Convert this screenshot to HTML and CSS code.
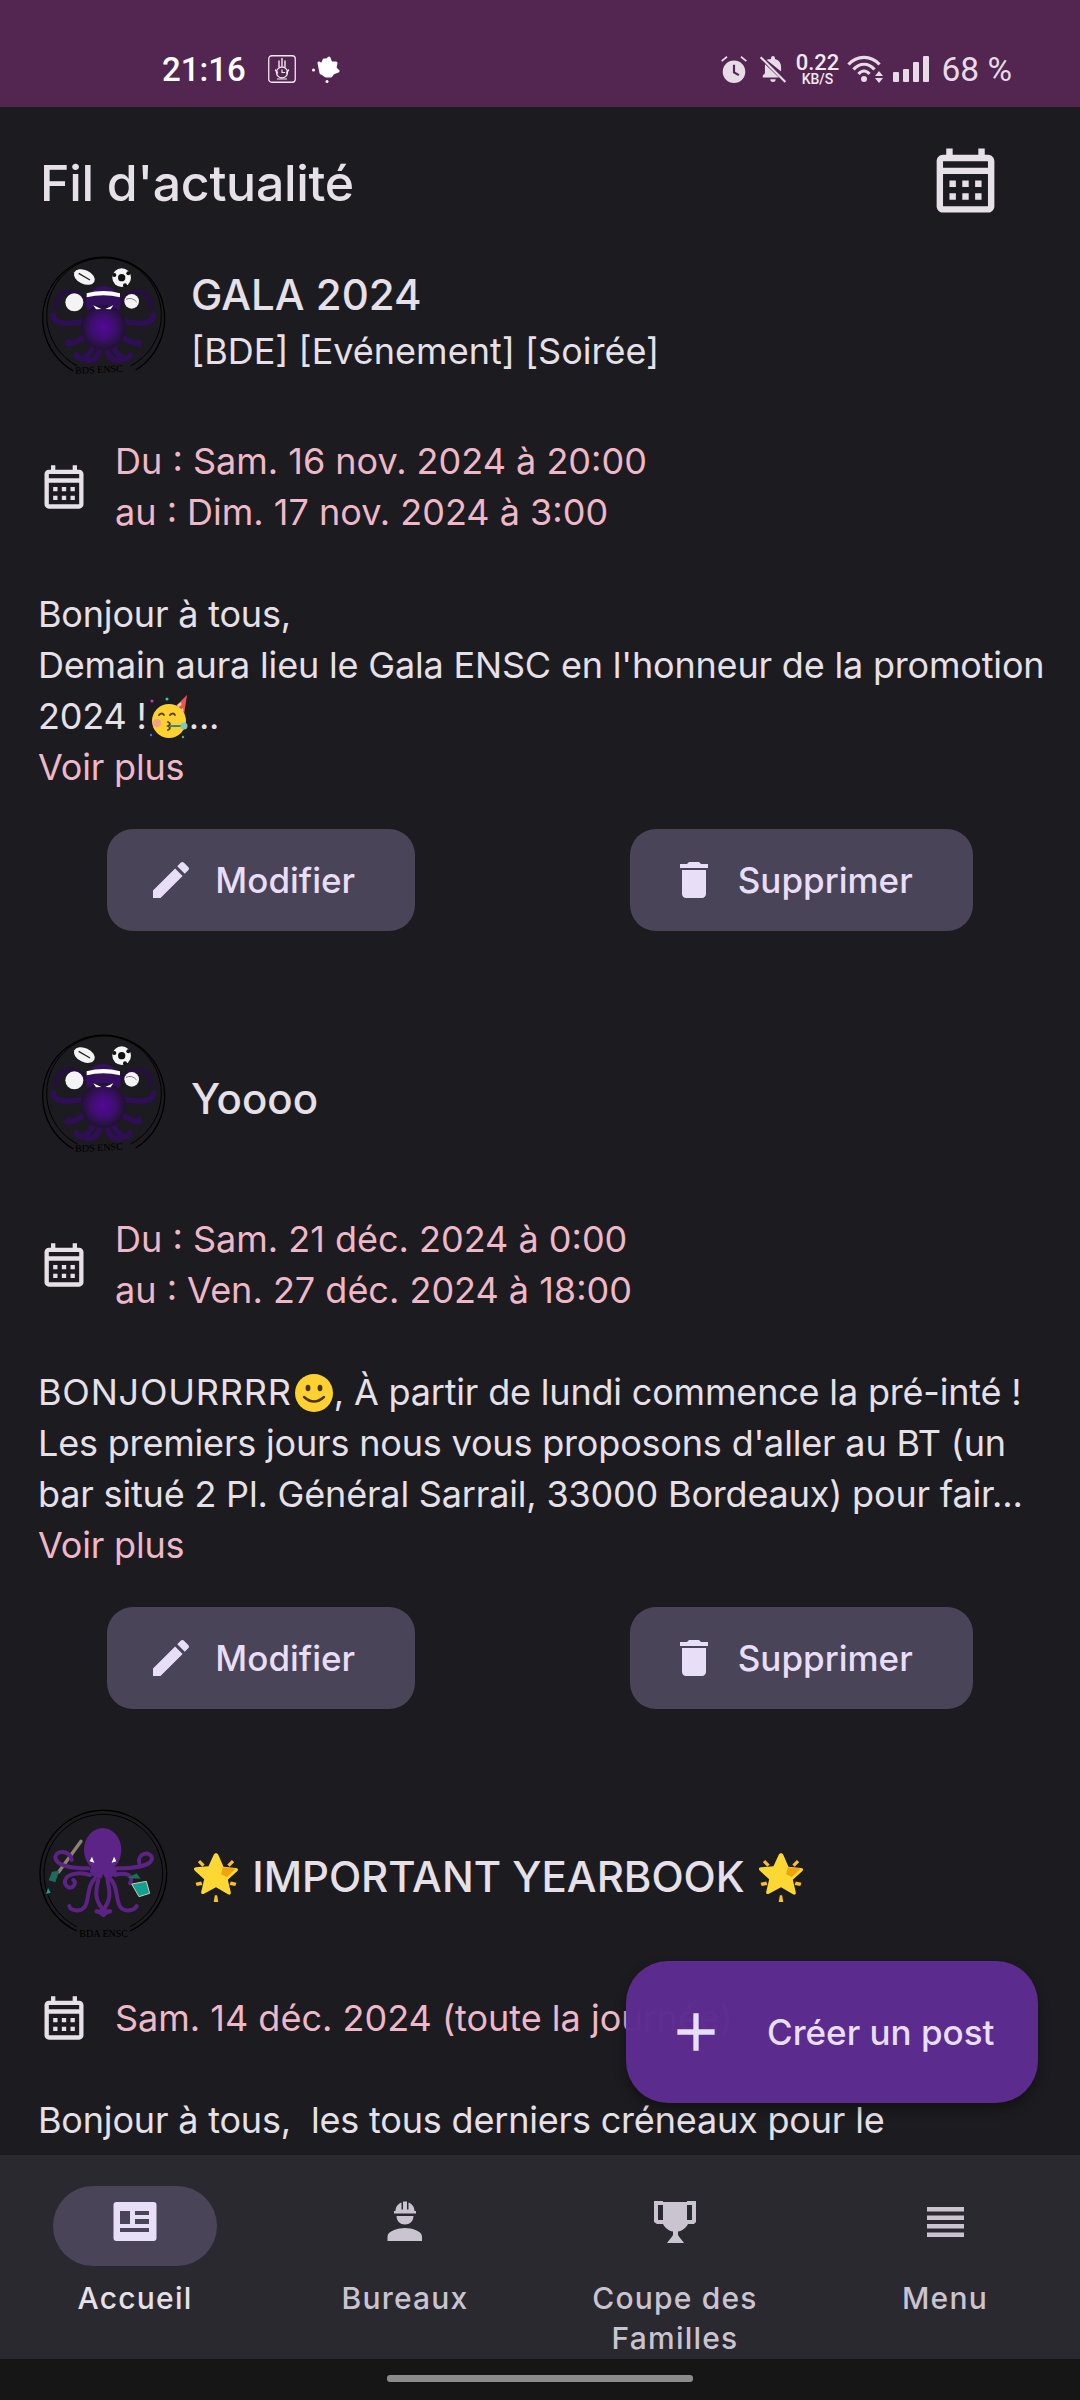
FILE: index.html
```html
<!DOCTYPE html>
<html lang="fr">
<head>
<meta charset="utf-8">
<title>Fil d'actualité</title>
<link rel="stylesheet" href="styles.css">
</head>
<body>
<svg class="defs" aria-hidden="true">
  <defs>
    <radialGradient id="bds" cx="50%" cy="50%" r="50%"><stop offset="0" stop-color="#54089a"/><stop offset=".55" stop-color="#3c0f6c"/><stop offset="1" stop-color="#1f1230"/></radialGradient>
    <symbol id="cal" viewBox="0 0 24 24"><path fill="currentColor" d="M19 4h-1V2h-2v2H8V2H6v2H5c-1.11 0-1.99.9-1.99 2L3 20c0 1.1.89 2 2 2h14c1.1 0 2-.9 2-2V6c0-1.1-.9-2-2-2zm0 16H5V10h14v10zm0-12H5V6h14v2zM9 14H7v-2h2v2zm4 0h-2v-2h2v2zm4 0h-2v-2h2v2zm-8 4H7v-2h2v2zm4 0h-2v-2h2v2zm4 0h-2v-2h2v2z"/></symbol>
    <symbol id="edit" viewBox="0 0 24 24"><path fill="currentColor" d="M3 17.25V21h3.75L17.81 9.94l-3.75-3.75L3 17.25zM20.71 7.04c.39-.39.39-1.02 0-1.41l-2.34-2.34c-.39-.39-1.02-.39-1.41 0l-1.83 1.83 3.75 3.75 1.83-1.83z"/></symbol>
    <symbol id="trash" viewBox="0 0 24 24"><path fill="currentColor" d="M6 19c0 1.1.9 2 2 2h8c1.1 0 2-.9 2-2V7H6v12zM19 4h-3.5l-1-1h-5l-1 1H5v2h14V4z"/></symbol>
    <symbol id="star" viewBox="0 0 40 44">
      <path fill="#fbc02d" d="M6 7l4 4-2 2-4-4zM34 7l2 2-4 4-2-2zM2 27l5-1 1 3-5 1zM38 27l-5-1-1 3 5 1zM19 38h2l1 6h-4z"/>
      <path fill="#fdd835" d="M20 1c1 0 1.600.6 2 1.500l4.600 10.500 11 1c2 .2 2.400 1.700 1 3l-8.200 7.500 2.600 11c.4 1.700-1 2.500-2.400 1.700L20 31l-10.600 5.700c-1.400.8-2.800 0-2.400-1.700l2.600-11L1.400 16.500c-1.400-1.300-1-2.800 1-3l11-1L18 2.500C18.400 1.600 19 1 20 1z"/>
      <path fill="#f0a30a" d="M26 13.500l11.500 1-8 7.500-5-2.500z"/>
    </symbol>
    <symbol id="party" viewBox="0 0 40 44">
      <path fill="#e8574f" d="M24 14L38 0l-3 20z"/>
      <path fill="#f5c6a0" d="M28 10l4-3 .6 3-3 2zM31 15l3-2 .5 3-2 2z"/>
      <circle cx="20" cy="26" r="17" fill="#fdd132"/>
      <circle cx="8" cy="28" r="4" fill="#f2a08a"/>
      <path fill="none" stroke="#5a3a10" stroke-width="1.800" stroke-linecap="round" d="M10 20q3-3 5 0M21 20q3-3 5 0M19 27q4 2 0 4q4 2 0 4"/>
      <path fill="none" stroke="#2f8f83" stroke-width="2" d="M21 31h12"/>
      <circle cx="35" cy="31" r="3.500" fill="#7fc7b8"/>
      <circle cx="3" cy="6" r="1.500" fill="#e02ec0"/><circle cx="18" cy="4" r="1.500" fill="#2fc3c9"/><circle cx="2" cy="40" r="1.200" fill="#3a78e0"/><circle cx="34" cy="42" r="1.200" fill="#58b368"/>
    </symbol>
    <symbol id="smile" viewBox="0 0 40 40">
      <circle cx="20" cy="20" r="19" fill="#fdd132"/>
      <ellipse cx="14" cy="15" rx="2.400" ry="3.200" fill="#4a3410"/><ellipse cx="26" cy="15" rx="2.400" ry="3.200" fill="#4a3410"/>
      <path fill="none" stroke="#4a3410" stroke-width="2.400" stroke-linecap="round" d="M10 24q10 9 20 0"/>
    </symbol>
    <symbol id="bdslogo" viewBox="60 45 390 390">
      <path fill="none" stroke="#000" stroke-width="4" d="M160 393A183 183 0 1 1 347 390"/>
      <path fill="none" stroke="#000" stroke-width="3" d="M172 378A172 172 0 1 1 332 378"/>
      <g fill="none" stroke="#24103c" stroke-width="16" stroke-linecap="round">
        <path d="M205 190C150 130 110 160 108 200"/><path d="M295 190C350 130 395 160 392 200"/>
      </g>
      <g fill="none" stroke="#2e0f56" stroke-width="17" stroke-linecap="round">
        <path d="M215 240C160 250 100 260 100 225"/><path d="M285 240C340 250 400 260 400 225"/>
        <path d="M210 280C170 310 130 320 145 305"/><path d="M290 280C330 310 370 320 355 305"/>
        <path d="M225 300C215 350 180 370 170 345"/><path d="M275 300C285 350 320 370 330 345"/>
        <path d="M240 310C240 350 225 365 200 360"/><path d="M260 310C260 350 275 365 300 360"/>
      </g>
      <ellipse cx="250" cy="190" rx="52" ry="52" fill="#35105f"/>
      <ellipse cx="250" cy="262" rx="68" ry="68" fill="url(#bds)"/>
      <path fill="#fff" d="M200 160q50 -14 100 0v12q-50 -12 -100 0z"/>
      <path fill="#fff" d="M220 196l24 11-16 1zM280 196l-24 11 16 1z"/>
      <ellipse cx="193" cy="111" rx="33" ry="21" fill="#f4f4f4" transform="rotate(25 193 111)"/>
      <path d="M176 100l34 20" stroke="#222" stroke-width="4"/>
      <circle cx="305" cy="113" r="28" fill="#f4f4f4"/><circle cx="305" cy="113" r="11" fill="#111"/><circle cx="283" cy="105" r="6" fill="#111"/><circle cx="325" cy="100" r="6" fill="#111"/><circle cx="315" cy="136" r="6" fill="#111"/>
      <circle cx="163" cy="187" r="27" fill="#f4f4f4"/>
      <circle cx="335" cy="184" r="22" fill="#f4f4f4"/>
      <path d="M318 178q18 -8 32 8" fill="none" stroke="#444" stroke-width="2"/>
      <text class="logo-text" x="166" y="398" transform="rotate(-3 250 398)">BDS ENSC</text>
    </symbol>
    <symbol id="bdalogo" viewBox="60 33 390 390">
      <path fill="none" stroke="#000" stroke-width="4" d="M170 393A190 190 0 1 1 330 393"/>
      <path fill="none" stroke="#000" stroke-width="3" d="M170 380A178 178 0 1 1 330 380"/>
      <path stroke="#8d8374" stroke-width="10" stroke-linecap="round" d="M183 124L116 216"/>
      <path fill="#1c6b5d" d="M118 212l-12 35-20 -6 10 -26z"/>
      <path fill="#12a090" d="M84 264l8 14-14 4z"/>
      <g fill="none" stroke="#5d2384" stroke-width="12" stroke-linecap="round">
        <path d="M205 205C165 205 105 200 106 170C110 150 150 150 155 180"/>
        <path d="M290 205C330 205 395 200 396 175C392 150 350 160 358 190"/>
        <path d="M210 225C180 215 130 220 135 250C150 280 175 250 160 240"/>
        <path d="M285 225C315 215 345 225 330 250"/>
        <path d="M225 235C200 260 210 290 195 320C180 340 150 330 148 318"/>
        <path d="M270 235C295 260 285 290 300 320C315 340 345 330 350 318"/>
        <path d="M235 240C225 280 225 300 250 330C225 345 220 320 250 345"/>
        <path d="M262 240C272 280 272 300 250 330C275 345 280 320 250 345"/>
      </g>
      <ellipse cx="248" cy="150" rx="56" ry="66" fill="#5c2486"/>
      <ellipse cx="250" cy="212" rx="40" ry="24" fill="#5c2486"/>
      <path fill="#1c1b1f" d="M250 222q-14 24 0 48q14 -24 0 -48z"/>
      <path fill="#fff" d="M216 170l7 18-14 -4zM282 170l-7 18 14 -4z"/>
      <path fill="#14a090" stroke="#cfcbb0" stroke-width="3" d="M335 252l44 -8 10 36-32 10z"/>
      <path fill="#1c6b5d" d="M322 234l28 -14 12 16z"/>
      <text class="logo-text" x="178" y="412">BDA ENSC</text>
    </symbol>
  </defs>
</svg>

<div class="phone">
  <div class="status">
    <div class="status-left">
      <span class="time">21:16</span>
      <svg class="st-hand" viewBox="0 0 28 28"><rect x=".75" y=".75" width="26.500" height="26.500" rx="3" fill="none" stroke="#f2e8f0" stroke-width="1.300"/><path fill="none" stroke="#f2e8f0" stroke-width="1.400" stroke-linecap="round" d="M11 12V6M14 11V3.500M17 12V6M7.500 15l2 3M20.500 15l-2 3"/><circle cx="14" cy="17.500" r="5.500" fill="none" stroke="#f2e8f0" stroke-width="1.300"/><path fill="none" stroke="#f2e8f0" stroke-width="1.200" d="M14 14.500v3h3M9 24h10"/></svg>
      <svg class="st-leaf" viewBox="0 0 28 28"><path fill="#fff" stroke="#fff" stroke-width="3" stroke-linejoin="round" d="M7 8l3 2 2-5 3 0 2-2 2 5 5 0-1 5 3 3-5 2-2 3-5 0-3-2-2-1-1-5z"/><circle cx="1.500" cy="15" r="1.500" fill="#fff"/><circle cx="15" cy="26.500" r="1.500" fill="#fff"/></svg>
    </div>
    <div class="status-right">
      <svg class="st-alarm" viewBox="0 0 26 26"><path fill="#e6dbe6" fill-rule="evenodd" d="M13 5a10.500 10.500 0 1 0 0 21 10.500 10.500 0 0 0 0-21zM12 9h2v6.500l4 2.400-1 1.700-5-3zM1 5l5-4 1 1.300-5 4zM25 5l-5-4-1 1.300 5 4z"/></svg>
      <svg class="st-bell" viewBox="0 0 26 26"><path fill="#e6dbe6" d="M13 1c1 0 1.800.8 1.800 1.800v.9c3.400.8 5.700 3.800 5.700 7.300v4.300L7.200 4.700C8 4 9.600 3.900 11.200 3.700v-.9C11.200 1.800 12 1 13 1zM5.600 8.500L18.500 21H3.500v-2l2-2v-6c0-.9 0-1.700.1-2.500zM10.500 22.500h5a2.500 2.500 0 0 1-5 0z"/><path stroke="#e6dbe6" stroke-width="2" d="M1.500 2l23 23"/></svg>
      <span class="speed"><span class="speed-num">0.22</span><span class="speed-unit">KB/S</span></span>
      <svg class="st-wifi" viewBox="0 0 37 30"><g fill="none" stroke="#e6dbe6" stroke-width="3.200"><path d="M1.500 10.500C10 1 24 1 32.500 10.500"/><path d="M6.500 15.500C12.500 8.500 21.500 8.500 27.500 15.500"/><path d="M11.500 20c3.500-4 7.500-4 11 0"/></g><circle cx="17" cy="25" r="3" fill="#e6dbe6"/><path fill="#e6dbe6" d="M32 17l4 5h-8zM28 24h8l-4 5z"/></svg>
      <svg class="st-signal" viewBox="0 0 36 26"><g fill="#e6dbe6"><rect x="0" y="16" width="6" height="10" rx="1"/><rect x="10" y="13" width="6" height="13" rx="1"/><rect x="20" y="6" width="6" height="20" rx="1"/><rect x="30" y="0" width="6" height="26" rx="1"/></g></svg>
      <span class="batt">68 %</span>
    </div>
  </div>

  <main class="feed">
    <header class="feed-head">
      <h1 class="feed-title">Fil d'actualité</h1>
      <svg class="head-cal"><use href="#cal"/></svg>
    </header>

    <article class="post">
      <div class="post-head">
        <svg class="avatar"><use href="#bdslogo"/></svg>
        <div class="titles-tagged">
          <h2 class="post-title">GALA 2024</h2>
          <p class="post-tags">[BDE] [Evénement] [Soirée]</p>
        </div>
      </div>
      <div class="post-date">
        <svg class="date-ico"><use href="#cal"/></svg>
        <p class="date-text">Du : Sam. 16 nov. 2024 à 20:00<br>au : Dim. 17 nov. 2024 à 3:00</p>
      </div>
      <p class="post-body">Bonjour à tous,<br>Demain aura lieu le Gala ENSC en l'honneur de la promotion<br>2024 !<svg class="emoji-party"><use href="#party"/></svg>...<br><span class="more">Voir plus</span></p>
      <div class="actions">
        <button class="btn"><svg class="btn-ico"><use href="#edit"/></svg>Modifier</button>
        <button class="btn"><svg class="btn-ico"><use href="#trash"/></svg>Supprimer</button>
      </div>
    </article>

    <article class="post">
      <div class="post-head">
        <svg class="avatar"><use href="#bdslogo"/></svg>
        <div>
          <h2 class="post-title">Yoooo</h2>
        </div>
      </div>
      <div class="post-date">
        <svg class="date-ico"><use href="#cal"/></svg>
        <p class="date-text">Du : Sam. 21 déc. 2024 à 0:00<br>au : Ven. 27 déc. 2024 à 18:00</p>
      </div>
      <p class="post-body"><span class="caps">BONJOURRRR</span><svg class="emoji-smile"><use href="#smile"/></svg>, À partir de lundi commence la pré-inté !<br>Les premiers jours nous vous proposons d'aller au BT (un<br>bar situé 2 Pl. Général Sarrail, 33000 Bordeaux) pour fair...<br><span class="more">Voir plus</span></p>
      <div class="actions">
        <button class="btn"><svg class="btn-ico"><use href="#edit"/></svg>Modifier</button>
        <button class="btn"><svg class="btn-ico"><use href="#trash"/></svg>Supprimer</button>
      </div>
    </article>

    <article class="post">
      <div class="post-head">
        <svg class="avatar"><use href="#bdalogo"/></svg>
        <div>
          <h2 class="post-title"><svg class="emoji-star"><use href="#star"/></svg> IMPORTANT YEARBOOK <svg class="emoji-star"><use href="#star"/></svg></h2>
        </div>
      </div>
      <div class="post-date">
        <svg class="date-ico"><use href="#cal"/></svg>
        <p class="date-text">Sam. 14 déc. 2024 (toute la journée)</p>
      </div>
      <p class="post-body">Bonjour à tous, &nbsp;les tous derniers créneaux pour le</p>
    </article>
  </main>

  <button class="fab">
    <svg class="fab-ico" viewBox="0 0 24 24"><path fill="currentColor" d="M19 13h-6v6h-2v-6H5v-2h6V5h2v6h6v2z"/></svg>
    Créer un post
  </button>

  <nav class="nav">
    <div class="nav-item active">
      <div class="nav-pill">
        <svg class="nav-ico" viewBox="0 0 60 60"><path fill="#e8def8" fill-rule="evenodd" d="M11.500 10h37a3 3 0 0 1 3 3v33a3 3 0 0 1-3 3h-37a3 3 0 0 1-3-3V13a3 3 0 0 1 3-3zM15 19v13h10V19zM30 19v4h14v-4zM30 27v5h14v-5zM15 36v4h29v-4z"/></svg>
      </div>
      <span class="nav-label">Accueil</span>
    </div>
    <div class="nav-item">
      <div class="nav-pill">
        <svg class="nav-ico" viewBox="0 0 60 60"><path fill="#cac4d0" d="M28 9.500h4v8h1.500v-7c3.500 1.200 6 4.500 6 8.500h1.500v2.500H19V19h1.500c0-4 2.500-7.300 6-8.500v7H28zM21.500 24h17c0 5-3.800 8.500-8.500 8.500s-8.500-3.500-8.500-8.500zM30 36c7 0 17 3 17 8.500V49H12.500v-4.500C12.500 39 23 36 30 36z"/></svg>
      </div>
      <span class="nav-label">Bureaux</span>
    </div>
    <div class="nav-item">
      <div class="nav-pill">
        <svg class="nav-ico" viewBox="0 0 60 60"><path fill="#cac4d0" fill-rule="evenodd" d="M9 9h9v1h24V9h9v21l-2 2h-6c-2 4-6 7-10 7.500V43c1 2 3 4 6 8H22c3-4 5-6 6-8v-3.500c-4-.5-8-3.500-10-7.500h-6l-3-2zM13 13v15h5V13zM42 13v15h5V13z"/></svg>
      </div>
      <span class="nav-label">Coupe des<br>Familles</span>
    </div>
    <div class="nav-item">
      <div class="nav-pill">
        <svg class="nav-ico" viewBox="0 0 60 60"><path fill="#cac4d0" d="M12 15h37v4.500H12zM12 23.500h37V28H12zM12 32h37v4.500H12zM12 40.500h37V45H12z"/></svg>
      </div>
      <span class="nav-label">Menu</span>
    </div>
  </nav>
  <div class="gesture"><div class="gesture-pill"></div></div>
</div>
</body>
</html>
```

FILE: styles.css
```css
* { box-sizing: border-box; }
html, body { margin: 0; padding: 0; }
body { background: #1c1b1f; font-family: Inter, "Noto Sans", sans-serif; color: #e6e0e9; }
.defs { display: block; width: 0; height: 0; }
symbol { overflow: visible; }
.logo-text { font-family: "Liberation Serif", serif; font-size: 30px; fill: #000; }

.phone { position: relative; width: 1080px; height: 2400px; display: flex; flex-direction: column; overflow: hidden; }

.status { height: 107px; flex: none; background: #522650; display: flex; justify-content: space-between; align-items: center; padding: 31px 68px 0 162px; }
.status-left, .status-right { display: flex; align-items: center; }
.time { font-family: Roboto, sans-serif; font-size: 33px; font-weight: 500; color: #fff; width: 106px; }
.st-hand { width: 28px; height: 28px; }
.st-leaf { width: 28px; height: 28px; margin-left: 16px; }
.st-alarm { width: 28px; height: 28px; }
.st-bell { width: 28px; height: 28px; margin-left: 11px; }
.speed { display: flex; flex-direction: column; align-items: center; margin-left: 10px; width: 40px; color: #f2e8f0; font-family: Roboto, sans-serif; font-weight: 500; }
.speed-num { font-size: 22px; line-height: 20px; }
.speed-unit { font-size: 14px; line-height: 13px; }
.st-wifi { width: 37px; height: 30px; margin-left: 10px; }
.st-signal { width: 36px; height: 26px; margin-left: 9px; }
.batt { font-family: Roboto, sans-serif; font-size: 33.5px; color: #e6dbe6; margin-left: 12px; white-space: nowrap; }

.feed { flex: 1; min-height: 0; overflow: hidden; }
.feed-head { height: 148px; display: flex; justify-content: space-between; align-items: center; padding: 0 76px 0 40px; }
.feed-title { margin: 0; font-size: 50px; font-weight: 500; line-height: 56px; letter-spacing: -.3px; position: relative; top: 2px; }
.head-cal { width: 77px; height: 77px; color: #e6e0e9; position: relative; top: -1px; }

.post { margin-bottom: 102px; }
.post-head { display: flex; align-items: center; gap: 21px; padding-left: 40px; min-height: 130px; }
.avatar { width: 130px; height: 130px; overflow: visible; flex: none; }
.titles-tagged { padding-top: 6px; }
.post-title { margin: 0; font-size: 42px; font-weight: 500; line-height: 57px; white-space: nowrap; }
.post-tags { margin: 0; font-size: 36px; line-height: 57px; white-space: nowrap; }

.post-date { margin-top: 51px; display: flex; align-items: center; gap: 25px; padding-left: 38px; }
.date-ico { width: 52px; height: 52px; flex: none; color: #e6e0e9; }
.date-text { margin: 0; font-size: 36px; line-height: 51px; color: #efb8c8; white-space: nowrap; }

.post-body { margin: 51px 0 0; padding-left: 38px; font-size: 36px; line-height: 51px; white-space: nowrap; letter-spacing: -.18px; }
.caps { letter-spacing: .8px; }
.more { color: #efb8c8; }
.emoji-party { width: 40px; height: 44px; vertical-align: -10px; margin-left: 2px; }
.emoji-smile { width: 40px; height: 40px; vertical-align: -8px; margin-left: 2px; }
.emoji-star { width: 50px; height: 50px; vertical-align: -10px; }

.actions { margin-top: 36px; display: flex; justify-content: space-around; }
.btn { height: 102px; display: flex; align-items: center; gap: 20px; padding: 0 60px 0 40px; border: 0; border-radius: 26px; background: #4a4458; color: #e8def8; font-family: Inter, sans-serif; font-size: 35px; font-weight: 500; }
.btn-ico { width: 48px; height: 48px; flex: none; }

.fab { position: absolute; left: 626px; top: 1961px; width: 412px; height: 142px; display: flex; align-items: center; padding: 0 0 0 38px; border: 0; border-radius: 42px; background: rgba(92, 44, 143, .985); box-shadow: 0 6px 12px rgba(0, 0, 0, .35); color: #e8def8; font-family: Inter, sans-serif; font-size: 35px; font-weight: 500; gap: 39px; }
.fab-ico { width: 64px; height: 64px; flex: none; }

.nav { flex: none; height: 204px; background: #2b2930; display: grid; grid-template-columns: repeat(4, 270px); padding-top: 31px; }
.nav-item { display: flex; flex-direction: column; align-items: center; }
.nav-pill { width: 164px; height: 80px; border-radius: 40px; display: flex; align-items: center; justify-content: center; padding-bottom: 8px; }
.active .nav-pill { background: #4a4458; }
.nav-ico { width: 60px; height: 60px; }
.nav-label { margin-top: 12px; font-size: 30px; font-weight: 500; line-height: 40px; letter-spacing: 1.2px; color: #cac4d0; text-align: center; white-space: nowrap; }
.active .nav-label { color: #e6e0e9; }

.gesture { flex: none; height: 41px; background: #161616; display: flex; justify-content: center; padding-top: 16px; }
.gesture-pill { width: 306px; height: 7px; border-radius: 3px; background: #8c8c8c; }
```
